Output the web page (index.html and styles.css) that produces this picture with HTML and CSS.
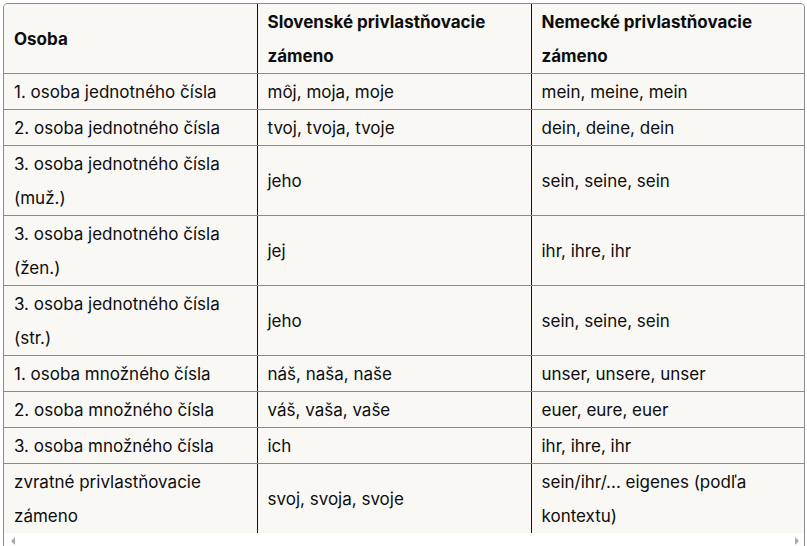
FILE: index.html
```html
<!DOCTYPE html>
<html lang="sk">
<head>
<meta charset="utf-8">
<link rel="stylesheet" href="styles.css">
</head>
<body>
<div class="wrap">
  <div class="scroller">
    <table class="grid">
      <colgroup>
        <col class="c1"><col class="c2"><col class="c3">
      </colgroup>
      <thead>
        <tr><th>Osoba</th><th>Slovenské privlastňovacie zámeno</th><th>Nemecké privlastňovacie zámeno</th></tr>
      </thead>
      <tbody>
        <tr><td>1. osoba jednotného čísla</td><td>môj, moja, moje</td><td>mein, meine, mein</td></tr>
        <tr><td>2. osoba jednotného čísla</td><td>tvoj, tvoja, tvoje</td><td>dein, deine, dein</td></tr>
        <tr><td>3. osoba jednotného čísla (muž.)</td><td>jeho</td><td>sein, seine, sein</td></tr>
        <tr><td>3. osoba jednotného čísla (žen.)</td><td>jej</td><td>ihr, ihre, ihr</td></tr>
        <tr><td>3. osoba jednotného čísla (str.)</td><td>jeho</td><td>sein, seine, sein</td></tr>
        <tr><td>1. osoba množného čísla</td><td>náš, naša, naše</td><td>unser, unsere, unser</td></tr>
        <tr><td>2. osoba množného čísla</td><td>váš, vaša, vaše</td><td>euer, eure, euer</td></tr>
        <tr><td>3. osoba množného čísla</td><td>ich</td><td>ihr, ihre, ihr</td></tr>
        <tr><td>zvratné privlastňovacie zámeno</td><td>svoj, svoja, svoje</td><td>sein/ihr/... eigenes (podľa kontextu)</td></tr>
      </tbody>
    </table>
  </div>
  <div class="hbar">
    <span class="arrow left"></span>
    <span class="arrow right"></span>
  </div>
</div>
</body>
</html>
```

FILE: styles.css
```css
html, body {
  margin: 0;
  padding: 0;
  background: #ffffff;
}
body {
  padding: 3px 2px 0 3px;
  font-family: "Inter", "Liberation Sans", sans-serif;
  color: #0d0d0d;
}
.wrap {
  border: 1px solid #8a8a8a;
  border-bottom: none;
  border-radius: 5px 5px 0 0;
  height: 545px;
  box-sizing: border-box;
  overflow: hidden;
  display: flex;
  flex-direction: column;
}
.scroller {
  overflow: hidden;
}
.grid {
  border-collapse: collapse;
  table-layout: fixed;
  width: 817px;
  background: #f9f8f5;
  font-size: 17px;
}
.c1 { width: 253px; }
.c2 { width: 274px; }
.c3 { width: 290px; }
.grid th, .grid td {
  text-align: left;
  vertical-align: middle;
  padding: 1px 10px 0 10px;
  line-height: 34px;
  border-bottom: 1px solid #8a8a8a;
  border-right: 1px solid #111;
}
.grid th:last-child, .grid td:last-child {
  padding-right: 40px;
}
.grid th {
  font-weight: 700;
}
.grid tbody tr:last-child td {
  border-bottom: none;
}
.hbar {
  position: relative;
  height: 14px;
  background: #fff;
}
.arrow {
  position: absolute;
  top: 4px;
  width: 0;
  height: 0;
  border-top: 4px solid transparent;
  border-bottom: 4px solid transparent;
}
.arrow.left {
  left: 7px;
  border-right: 4px solid #a8a8a8;
}
.arrow.right {
  right: 5px;
  border-left: 4px solid #a8a8a8;
}
```
